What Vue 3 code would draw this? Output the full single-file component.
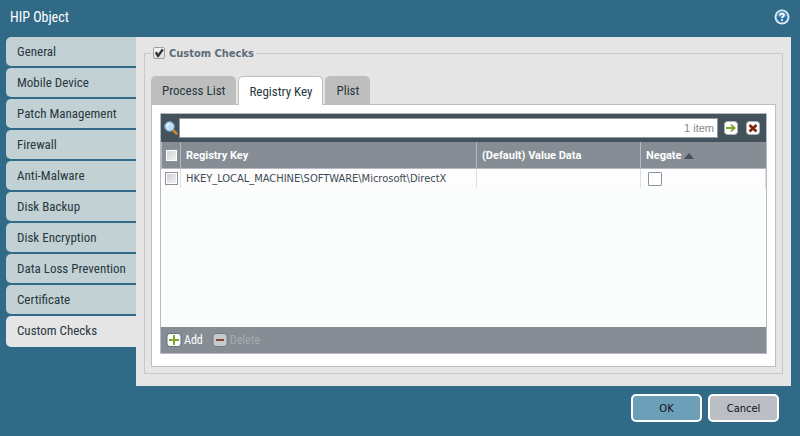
<template>
  <div class="dialog">
    <header class="dialog-header">
      <h1>HIP Object</h1>
      <button class="icon-btn" type="button" aria-label="Help">
        <svg width="16" height="16" viewBox="0 0 16 16">
          <circle cx="8" cy="8" r="7.500" fill="#dfe9f6" />
          <circle cx="8" cy="8" r="5.500" fill="#2a6f9f" />
          <path d="M3 7a5 5 0 0 1 10 0q-5 2-10 0z" fill="#5b97bd" />
          <path d="M6 6.600C6 4 10.200 4 10 6.400C9.900 7.700 8 7.700 8 9.300M8 10.300V12" fill="none" stroke="#fff" stroke-width="1.700" />
        </svg>
      </button>
    </header>

    <div class="dialog-body">
      <nav class="side">
        <button
          v-for="item in sections"
          :key="item"
          type="button"
          class="side-tab"
          :class="{ active: item === section }"
          @click="section = item"
        >{{ item }}</button>
      </nav>

      <main class="content">
        <fieldset class="checks">
          <legend>
            <input id="custom-checks" v-model="enabled" type="checkbox" class="check-native">
            <label for="custom-checks">Custom Checks</label>
          </legend>

          <div class="tabs">
            <button
              v-for="item in tabs"
              :key="item"
              type="button"
              class="tab"
              :class="{ active: item === tab }"
              @click="tab = item"
            >{{ item }}</button>
          </div>

          <div class="panel">
            <div class="grid">
              <div class="toolbar">
                <svg class="search-icon" width="14" height="14" viewBox="0 0 14 14">
                  <path d="M9 9l3.500 3.500" stroke="#c98239" stroke-width="2.600" stroke-linecap="round" />
                  <circle cx="5.500" cy="5.500" r="4.700" fill="#c3dcf7" stroke="#86aede" />
                  <path d="M3 5.500a2.500 2.500 0 0 1 3-2.500" fill="none" stroke="#eef7ff" stroke-width="1.500" />
                </svg>
                <div class="search">
                  <input v-model="query" type="text" aria-label="Search">
                  <span>{{ filtered.length }} item</span>
                </div>
                <button class="icon-btn" type="button" aria-label="Apply filter">
                  <svg width="14" height="14" viewBox="0 0 14 14">
                    <rect x=".5" y=".5" width="13" height="13" rx="3" fill="#fff" stroke="#aab5ba" />
                    <path d="M2 6h6L6 3.500h2.200L12 7l-3.800 3.500H6L8 8H2z" fill="#86a32d" />
                  </svg>
                </button>
                <button class="icon-btn clear" type="button" aria-label="Clear filter" @click="query = ''">
                  <svg width="14" height="14" viewBox="0 0 14 14">
                    <rect x=".5" y=".5" width="13" height="13" rx="3" fill="#fff" stroke="#aab5ba" />
                    <path d="M3.500 4l7 6.500M10.500 4l-7 6.500" stroke="#80230b" stroke-width="2.600" />
                  </svg>
                </button>
              </div>

              <div class="rows">
                <table>
                  <colgroup>
                    <col class="col-check">
                    <col class="col-key">
                    <col class="col-value">
                    <col>
                  </colgroup>
                  <thead>
                    <tr>
                      <th><input v-model="allSelected" type="checkbox" class="check-old" aria-label="Select all"></th>
                      <th>Registry Key</th>
                      <th>(Default) Value Data</th>
                      <th>Negate<i class="sort"></i></th>
                    </tr>
                  </thead>
                  <tbody>
                    <tr v-for="row in filtered" :key="row.key">
                      <td><input v-model="row.selected" type="checkbox" class="check-old" aria-label="Select row"></td>
                      <td>{{ row.key }}</td>
                      <td>{{ row.value }}</td>
                      <td><input v-model="row.negate" type="checkbox" class="check-flat" aria-label="Negate"></td>
                    </tr>
                  </tbody>
                </table>
              </div>

              <div class="actions">
                <button type="button">
                  <svg width="16" height="14" viewBox="0 0 16 14">
                    <rect x="1" y=".5" width="14" height="13" rx="3" fill="#fff" stroke="#5f707b" />
                    <path d="M3 7h10M8 2v10" stroke="#86a32d" stroke-width="2" />
                  </svg>
                  Add
                </button>
                <button type="button" disabled>
                  <svg width="16" height="14" viewBox="0 0 16 14">
                    <rect x="1" y=".5" width="14" height="13" rx="3" fill="#c6cacd" stroke="#6e7c86" />
                    <path d="M4 7h8" stroke="#84493a" stroke-width="2" />
                  </svg>
                  Delete
                </button>
              </div>
            </div>
          </div>
        </fieldset>
      </main>
    </div>

    <footer class="dialog-footer">
      <button type="button" class="btn btn-ok">OK</button>
      <button type="button" class="btn">Cancel</button>
    </footer>
  </div>
</template>

<script setup>
import { computed, ref } from 'vue'

const sections = [
  'General',
  'Mobile Device',
  'Patch Management',
  'Firewall',
  'Anti-Malware',
  'Disk Backup',
  'Disk Encryption',
  'Data Loss Prevention',
  'Certificate',
  'Custom Checks',
]
const section = ref('Custom Checks')

const tabs = ['Process List', 'Registry Key', 'Plist']
const tab = ref('Registry Key')

const enabled = ref(true)
const query = ref('')
const rows = ref([
  { key: 'HKEY_LOCAL_MACHINE\\SOFTWARE\\Microsoft\\DirectX', value: '', negate: false, selected: false },
])

const filtered = computed(() => {
  return rows.value.filter(row => row.key.toLowerCase().includes(query.value.toLowerCase()))
})

const allSelected = computed({
  get: () => rows.value.every(row => row.selected),
  set: value => rows.value.forEach(row => { row.selected = value }),
})
</script>

<style>
body {
  background: #306a87;
}
</style>

<style scoped>
* {
  box-sizing: border-box;
}
.dialog {
  min-height: 100vh;
  background: #306a87;
  font-family: "DejaVu Sans Condensed", "DejaVu Sans", sans-serif;
  font-size: 11px;
  color: #3c4a54;
}
button {
  font-family: inherit;
  font-size: inherit;
  cursor: pointer;
}
.dialog-header {
  display: flex;
  justify-content: space-between;
  align-items: center;
  height: 37px;
  padding: 0 10px 4px;
}
.dialog-header h1 {
  margin: 0;
  font: 14px "Roboto Condensed", Roboto, sans-serif;
  color: #fff;
}
.icon-btn {
  display: flex;
  padding: 0;
  border: 0;
  background: none;
}
.dialog-body {
  display: flex;
  padding: 0 9px 0 6px;
}
.side {
  flex: none;
  width: 130px;
  display: flex;
  flex-direction: column;
  gap: 2px;
}
.side-tab {
  height: 29px;
  padding: 0 11px;
  border: 0;
  border-radius: 5px 0 0 5px;
  background: #c2d1d4;
  color: #283840;
  font: 13px "Roboto Condensed", Roboto, sans-serif;
  text-align: left;
  white-space: nowrap;
}
.side-tab.active {
  height: 31px;
  padding-bottom: 2px;
  background: #e5e5e5;
}
.content {
  flex: 1;
  min-width: 0;
  padding: 8px 8px 12px;
  background: #e5e5e5;
}
.checks {
  min-width: 0;
  margin: 0;
  padding: 15px 6px 6px;
  border: 1px solid #c8c8c8;
}
legend {
  display: flex;
  align-items: center;
  gap: 4px;
  height: 16px;
  padding: 0 2px;
  font-weight: bold;
  color: #5c6c7a;
}
input[type="checkbox"] {
  appearance: none;
  margin: 0;
  display: block;
}
.check-native {
  width: 12px;
  height: 12px;
  border: 1px solid #a0a0a0;
  border-radius: 2px;
  background: linear-gradient(#f4f4f4, #dedede);
}
.check-native:checked::before {
  content: "";
  display: block;
  height: 100%;
  background: #333;
  clip-path: polygon(8% 50%, 28% 36%, 42% 58%, 78% 8%, 98% 20%, 46% 92%, 36% 92%);
}
.tabs {
  display: flex;
  gap: 2px;
}
.tab {
  height: 28px;
  padding: 0 11px;
  border: 0;
  border-radius: 5px 5px 0 0;
  background: #bebebe;
  color: #283840;
  font: 13px "Roboto Condensed", Roboto, sans-serif;
}
.tab.active {
  height: 29px;
  margin-bottom: -1px;
  padding: 0 10px;
  border: 1px solid #bebebe;
  border-bottom: 0;
  background: #fff;
  position: relative;
}
.panel {
  padding: 8px 8px 12px;
  border: 1px solid #bebebe;
  background: #fff;
}
.grid {
  border: 1px solid #b6b9c2;
}
.toolbar {
  display: flex;
  align-items: center;
  height: 28px;
  padding: 0 6px 0 3px;
  background: #44525c;
}
.search-icon {
  flex: none;
  margin-right: 1px;
}
.search {
  flex: 1;
  display: flex;
  align-items: center;
  height: 20px;
  margin-right: 6px;
  padding-right: 3px;
  border: 1px solid #969a9e;
  background: #fff;
  font-family: "Liberation Sans", sans-serif;
  color: #888;
}
.search input {
  flex: 1;
  min-width: 0;
  border: 0;
  outline: 0;
  background: none;
}
.clear {
  margin-left: 8px;
}
.rows {
  min-height: 185px;
  background: #fbfdfc;
}
table {
  width: 100%;
  border-collapse: separate;
  border-spacing: 0;
  table-layout: fixed;
}
.col-check {
  width: 20px;
}
.col-key {
  width: 296px;
}
.col-value {
  width: 164px;
}
th {
  height: 27px;
  padding: 0 5px;
  border-right: 1px solid #b6b9c2;
  border-bottom: 1px solid #b6b9c2;
  background: #868d94;
  color: #fff;
  font-family: Roboto, sans-serif;
  text-align: left;
}
th:last-child {
  border-right: 0;
}
td {
  height: 19px;
  padding: 0 5px;
  border-right: 1px solid #dedfe2;
  background: #fdfdfd;
}
th:first-child,
td:first-child {
  padding: 0 0 0 4px;
}
th:first-child {
  padding-left: 3px;
  border-left: 1px solid #b6b9c2;
}
.check-old {
  width: 13px;
  height: 13px;
  border: 1px solid #8e9297;
  background: linear-gradient(135deg, #c9cdd4, #f6f6f6);
  box-shadow: inset 0 0 0 1px #fff;
}
.check-flat {
  width: 14px;
  height: 14px;
  border: 1px solid #8795a3;
  border-radius: 1px;
  background: #fff;
}
td .check-flat[type="checkbox"] {
  margin-left: 2px;
}
.check-old:checked,
.check-flat:checked {
  background: #5c6c7a;
}
.sort {
  display: inline-block;
  margin-left: 2px;
  border: 5px solid transparent;
  border-top: 0;
  border-bottom: 6px solid #44525c;
}
.actions {
  display: flex;
  align-items: center;
  gap: 9px;
  height: 26px;
  padding: 0 5px;
  background: #868d94;
}
.actions button {
  display: flex;
  align-items: center;
  gap: 2px;
  padding: 0;
  border: 0;
  background: none;
  color: #fff;
  font: 12px "Roboto Condensed", Roboto, sans-serif;
}
.actions button:disabled {
  color: #a5abb1;
}
.dialog-footer {
  display: flex;
  justify-content: flex-end;
  gap: 6px;
  padding: 8px 21px 14px;
}
.btn {
  width: 71px;
  height: 28px;
  border: 2px solid #fff;
  border-radius: 5px;
  background: #bcbec6;
  color: #111;
}
.btn-ok {
  background: #6ca0b8;
}
</style>
